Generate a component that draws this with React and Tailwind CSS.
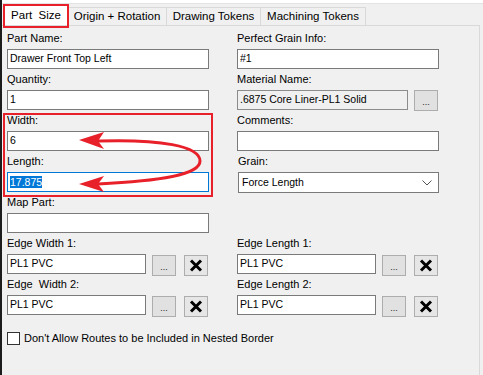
import React from "react";

const font = { fontFamily: '"Liberation Sans", Arial, sans-serif' };

function Label({ children, className = "" }) {
  return (
    <div className={`h-[13px] text-[11px] leading-[13px] text-black whitespace-pre ${className}`}>
      {children}
    </div>
  );
}

function TextBox({ value = "", className = "", disabled = false, focused = false }) {
  return (
    <div
      className={`h-[20px] border flex items-center px-[2px] text-[10.5px] text-black whitespace-nowrap overflow-hidden ${
        focused ? "border-[#0078d7]" : "border-[#7a7a7a]"
      } ${disabled ? "bg-[#f0f0f0]" : "bg-white"} ${className}`}
    >
      {focused ? (
        <span className="bg-[#0078d7] text-white leading-[12px]">{value}</span>
      ) : (
        value
      )}
    </div>
  );
}

function DotsButton() {
  return (
    <div className="w-[24px] h-[21px] bg-[#e1e1e1] border border-[#adadad] flex items-end justify-center pb-[3px] text-[9px] leading-[9px] text-[#222]">
      ...
    </div>
  );
}

function ClearButton() {
  return (
    <div className="w-[24px] h-[21px] bg-[#e6e6e6] border border-[#adadad] flex items-center justify-center">
      <svg width="14" height="13" viewBox="0 0 14 13">
        <path d="M2 1.5 L12 11.5 M12 1.5 L2 11.5" stroke="#000" strokeWidth="3" />
      </svg>
    </div>
  );
}

function Field({ label, children, labelClass = "" }) {
  return (
    <div className="h-[41px] flex flex-col">
      <Label className={labelClass}>{label}</Label>
      <div className="mt-[4px]">{children}</div>
    </div>
  );
}

function EdgeField({ label, value }) {
  return (
    <Field label={label}>
      <div className="flex items-start">
        <TextBox value={value} className="w-[139px]" />
        <div className="ml-[6px] mt-[1px]">
          <DotsButton />
        </div>
        <div className="ml-[8px] mt-[1px]">
          <ClearButton />
        </div>
      </div>
    </Field>
  );
}

export default function App() {
  return (
    <div className="w-[483px] h-[375px] bg-[#f0f0f0] flex relative overflow-hidden" style={font}>
      {/* left window edge */}
      <div className="w-[2px] bg-[#1c1c1c] shrink-0" />

      <div className="flex-1 flex flex-col">
        <div className="h-[3px] bg-white" />
        <div className="h-[1px] bg-[#e3e3e3]" />

        {/* Tabs */}
        <div className="h-[21px] flex items-end pl-[2px]">
          <div className="w-[64px] h-[21px] bg-white border-x border-t border-[#d9d9d9] flex items-center justify-center text-[11.5px] text-black pt-[1px]">
            Part&nbsp; Size
          </div>
          <div className="w-[99px] h-[18px] border-t border-r border-[#d9d9d9] flex items-center justify-center text-[11.5px] text-black">
            Origin + Rotation
          </div>
          <div className="w-[94px] h-[18px] border-t border-r border-[#d9d9d9] flex items-center justify-center text-[11.5px] text-black">
            Drawing Tokens
          </div>
          <div className="w-[105px] h-[18px] border-t border-r border-[#d9d9d9] flex items-center justify-center text-[11.5px] text-black">
            Machining Tokens
          </div>
        </div>

        {/* Panel */}
        <div className="flex-1 border-t border-r border-[#d9d9d9] mr-[3px] pl-[5px] pt-[6px]">
          <div className="grid grid-cols-[202px_202px] gap-x-[28px]">
            <div className="flex flex-col">
              <Field label="Part Name:">
                <TextBox value="Drawer Front Top Left" />
              </Field>
              <Field label="Quantity:">
                <TextBox value="1" />
              </Field>
              <Field label="Width:">
                <TextBox value="6" />
              </Field>
              <Field label="Length:">
                <TextBox value="17.875" focused />
              </Field>
              <Field label="Map Part:">
                <TextBox value="" />
              </Field>
              <EdgeField label="Edge Width 1:" value="PL1 PVC" />
              <EdgeField label="Edge  Width 2:" value="PL1 PVC" />
            </div>

            <div className="flex flex-col">
              <Field label="Perfect Grain Info:">
                <TextBox value="#1" />
              </Field>
              <Field label="Material Name:">
                <div className="flex items-start">
                  <TextBox value=".6875 Core Liner-PL1 Solid" disabled className="w-[171px] border-[#8c8c8c]" />
                  <div className="ml-[6px]">
                    <DotsButton />
                  </div>
                </div>
              </Field>
              <Field label="Comments:">
                <TextBox value="" />
              </Field>
              <Field label="Grain:" labelClass="pl-[1px]">
                <div className="h-[21px] ml-[1px] border border-[#7a7a7a] bg-white flex items-center justify-between pl-[3px] pr-[6px] text-[10.5px] text-black">
                  Force Length
                  <svg width="10" height="6" viewBox="0 0 10 6">
                    <path d="M0.5 0.5 L5 5 L9.5 0.5" fill="none" stroke="#555" strokeWidth="1" />
                  </svg>
                </div>
              </Field>
              <div className="h-[41px]" />
              <EdgeField label="Edge Length 1:" value="PL1 PVC" />
              <EdgeField label="Edge Length 2:" value="PL1 PVC" />
            </div>
          </div>

          <div className="flex items-center mt-[11px]">
            <div className="w-[13px] h-[13px] border border-[#333] bg-white" />
            <span className="ml-[4px] text-[11px] text-black">
              Don't Allow Routes to be Included in Nested Border
            </span>
          </div>
        </div>
      </div>

      {/* annotations */}
      <div className="absolute left-[3px] top-[4px] w-[66px] h-[24px] border-2 border-[#e8202a]" />
      <div className="absolute left-[3px] top-[113px] w-[210px] h-[84px] border-2 border-[#e8202a]" />
      <svg className="absolute left-0 top-0" width="483" height="375" viewBox="0 0 483 375">
        <path
          d="M98 141 C 160 139, 200 146, 200 161 C 200 175, 160 181, 98 184"
          fill="none"
          stroke="#e8202a"
          strokeWidth="3"
        />
        <polygon points="79,140 104,132 98,141 104,149" fill="#e8202a" />
        <polygon points="79,184 104,176 98,184 104,192" fill="#e8202a" />
      </svg>
    </div>
  );
}
